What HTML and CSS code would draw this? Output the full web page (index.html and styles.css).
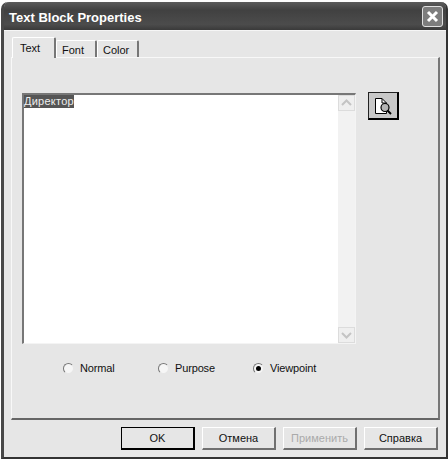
FILE: index.html
```html
<!DOCTYPE html>
<html lang="en">
<head>
    <meta charset="UTF-8" />
    <title>Text Block Properties</title>
    <link rel="stylesheet" href="styles.css">
</head>
<body>
    <div class="dialog">
        <div class="titlebar">
            <span class="title">Text Block Properties</span>
            <button class="close" type="button" aria-label="Close">
                <svg width="19" height="19" viewBox="0 0 19 19"><path d="M5 5 L14 14 M14 5 L5 14" stroke="#fff" stroke-width="3" fill="none" /></svg>
            </button>
        </div>
        <div class="content">
            <div class="tabs">
                <div class="tab active">Text</div>
                <div class="tab">Font</div>
                <div class="tab tab-color">Color</div>
            </div>
            <div class="panel">
                <div class="editor-row">
                    <div class="editor">
                        <div class="editor-text"><span class="selected">Директор</span></div>
                        <div class="scrollbar">
                            <div class="scroll-btn">
                                <svg width="17" height="16" viewBox="0 0 17 16"><path d="M4 10 L8.5 5.5 L13 10" stroke="#c4c4c4" stroke-width="2" fill="none" /></svg>
                            </div>
                            <div class="scroll-btn">
                                <svg width="17" height="16" viewBox="0 0 17 16"><path d="M4 6 L8.5 10.5 L13 6" stroke="#c4c4c4" stroke-width="2" fill="none" /></svg>
                            </div>
                        </div>
                    </div>
                    <button class="preview" type="button" aria-label="Preview">
                        <svg width="20" height="20" viewBox="0 0 20 20">
                            <path d="M2.5 2.5 H9 L13.5 7 V17.5 H2.5 Z" fill="#fff" stroke="#000" />
                            <path d="M9 2.5 V7 H13.5" fill="none" stroke="#000" />
                            <circle cx="12" cy="11.5" r="4" fill="#b4b4b4" stroke="#000" stroke-width="1.2" />
                            <path d="M14.5 14.5 L18 18" stroke="#000" stroke-width="2" />
                        </svg>
                    </button>
                </div>
                <div class="radios">
                    <label class="radio"><span class="dot"></span>Normal</label>
                    <label class="radio"><span class="dot"></span>Purpose</label>
                    <label class="radio"><span class="dot checked"></span>Viewpoint</label>
                </div>
            </div>
            <div class="buttons">
                <button class="btn default" type="button">OK</button>
                <button class="btn" type="button">Отмена</button>
                <button class="btn disabled" type="button">Применить</button>
                <button class="btn" type="button">Справка</button>
            </div>
        </div>
    </div>
</body>
</html>
```

FILE: styles.css
```css
* {
    box-sizing: border-box;
}

body {
    margin: 0;
    width: 448px;
    height: 459px;
    background: #fff;
    font-family: "Liberation Sans", Arial, sans-serif;
    font-size: 11px;
    color: #111;
    overflow: hidden;
}

.dialog {
    width: 447px;
    height: 457px;
    margin-left: 1px;
    margin-top: 2px;
    display: flex;
    flex-direction: column;
    background: #e6e6e6;
    border: 2px solid #333;
    border-left: 3px solid #484848;
    border-top: 0;
    border-radius: 7px 7px 0 0;
}

.titlebar {
    height: 28px;
    flex: none;
    display: flex;
    align-items: center;
    justify-content: space-between;
    padding: 0 3px 0 5px;
    background: linear-gradient(#5c5c5c 0, #414141 30%, #4c4c4c 80%, #3a3a3a 100%);
    border-radius: 5px 5px 0 0;
}

.title {
    padding-top: 2px;
    color: #fff;
    font-size: 13px;
    font-weight: bold;
}

.close {
    width: 21px;
    height: 21px;
    padding: 0;
    display: flex;
    align-items: center;
    justify-content: center;
    background: #7d7d7d;
    border: 1px solid #e0e0e0;
    border-radius: 3px;
}

.content {
    flex: 1;
    display: flex;
    flex-direction: column;
    padding: 6px 6px 7px 7px;
    border-top: 1px solid #f6f6f6;
}

.tabs {
    display: flex;
    padding-left: 1px;
    height: 20px;
    position: relative;
    z-index: 1;
}

.tab {
    width: 41px;
    height: 17px;
    margin-top: 3px;
    padding: 3px 0 0 5px;
    background: #e6e6e6;
    border-top: 1px solid #fff;
    border-left: 1px solid #fff;
    border-right: 2px solid #777;
    border-radius: 2px 2px 0 0;
}

.tab-color {
    width: 42px;
}

.tab.active {
    width: 44px;
    height: 21px;
    margin-top: 0;
    padding: 4px 0 0 7px;
}

.panel {
    flex: 1;
    border: 1px solid #f8f8f8;
    border-right: 2px solid #777;
    border-bottom: 2px solid #666;
    padding: 35px 0 0 10px;
    display: flex;
    flex-direction: column;
}

.editor-row {
    display: flex;
    gap: 12px;
    align-items: flex-start;
}

.editor {
    flex: none;
    width: 334px;
    height: 251px;
    display: flex;
    background: #fff;
    border-top: 2px solid #777;
    border-left: 2px solid #777;
    border-right: 1px solid #f4f4f4;
    border-bottom: 1px solid #f4f4f4;
}

.editor-text {
    flex: 1;
    font-size: 11px;
    letter-spacing: 0.25px;
}

.selected {
    display: inline-block;
    height: 13px;
    line-height: 13px;
    background: #555;
    color: #eee;
}

.scrollbar {
    width: 17px;
    display: flex;
    flex-direction: column;
    justify-content: space-between;
    background: #f2f2f2;
}

.scroll-btn {
    width: 17px;
    height: 16px;
    background: #efefef;
    border: 1px solid #dcdcdc;
}

.scroll-btn svg {
    display: block;
    margin: -1px;
}

.preview {
    width: 31px;
    height: 28px;
    margin-top: -1px;
    padding: 0;
    display: flex;
    align-items: center;
    justify-content: center;
    background: #c8c8c8;
    border: 2px solid #000;
    border-top: 1px solid #222;
    border-left: 1px solid #222;
}

.radios {
    display: flex;
    padding-left: 41px;
    margin-top: 16px;
    height: 16px;
    align-items: center;
}

.radio {
    display: flex;
    align-items: center;
    gap: 6px;
    width: 95px;
    letter-spacing: -0.15px;
}

.dot {
    width: 11px;
    height: 11px;
    border-radius: 50%;
    background: #f6f6f6;
    border: 1px solid;
    border-color: #777 #e6e6e6 #e6e6e6 #777;
    display: flex;
    align-items: center;
    justify-content: center;
}

.dot.checked::after {
    content: "";
    width: 5px;
    height: 5px;
    border-radius: 50%;
    background: #000;
}

.buttons {
    display: flex;
    justify-content: flex-end;
    gap: 7px;
    margin-top: 7px;
    height: 23px;
    padding-right: 2px;
}

.btn {
    width: 74px;
    height: 23px;
    padding: 0;
    font-family: inherit;
    font-size: 11px;
    color: #111;
    background: #e6e6e6;
    border-style: solid;
    border-width: 1px 2px 2px 1px;
    border-color: #fff #707070 #707070 #fff;
}

.btn.default {
    border-color: #000;
}

.btn.disabled {
    color: #aaa;
}
```
